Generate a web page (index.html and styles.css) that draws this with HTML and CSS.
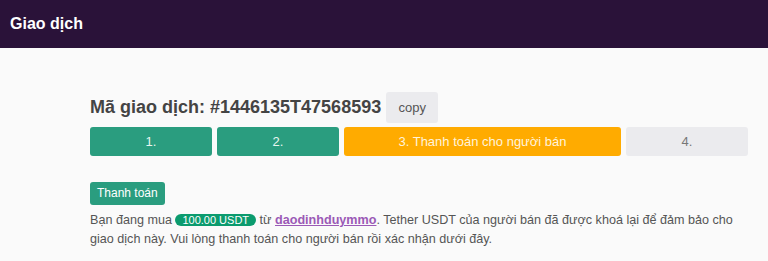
FILE: index.html
```html
<!DOCTYPE html>
<html>
    <head>
    <title>Giao dịch</title>
    <meta charset="UTF-8">
    <meta name="viewport" content="width=device-width, initial-scale=1.0">
    <link rel="stylesheet" href="styles.css">
    </head>

    <body>
        <div class="thanh-tren">Giao dịch</div>

        <div class="noi-dung">
            <div class="ma-gd">
                <span class="nhan">Mã giao dịch: #1446135T47568593</span>
                <button class="nut-copy">copy</button>
            </div>

            <div class="buoc">
                <div class="o-buoc xong">1.</div>
                <div class="o-buoc xong">2.</div>
                <div class="o-buoc dang">3. Thanh toán cho người bán</div>
                <div class="o-buoc cho">4.</div>
            </div>

            <span class="the">Thanh toán</span>
            <p class="mo-ta">
                Bạn đang mua <span class="vien">100.00 USDT</span> từ <a href="#" class="nguoi-ban">daodinhduymmo</a>. Tether USDT của người bán đã được khoá lại để đảm bảo cho giao dịch này. Vui lòng thanh toán cho người bán rồi xác nhận dưới đây.
            </p>
        </div>
    </body>
</html>
```

FILE: styles.css
```css
body{
    margin: 0;
    background-color: #fafafa;
    font-family: "Liberation Sans", Arial, sans-serif;
    font-size: 13px;
    color: #555;
}

.thanh-tren{
    height: 48px;
    background-color: #2a1239;
    color: white;
    font-size: 16px;
    font-weight: bold;
    line-height: 48px;
    padding-left: 10px;
}

.noi-dung{
    margin-left: 90px;
    width: 658px;
    padding-top: 44px;
}

.ma-gd{
    display: flex;
    align-items: center;
    gap: 5px;
}

.nhan{
    font-size: 18px;
    font-weight: bold;
    color: #444;
}

.nut-copy{
    width: 52px;
    height: 31px;
    border: none;
    border-radius: 3px;
    background-color: #ebebee;
    color: #555;
    font-family: inherit;
    font-size: 13px;
}

.buoc{
    display: grid;
    grid-template-columns: 122px 122px 1fr 122px;
    gap: 5px;
    margin-top: 4px;
}

.o-buoc{
    height: 29px;
    line-height: 29px;
    text-align: center;
    border-radius: 3px;
}

.xong{
    background-color: #2a9d7f;
    color: #e8f5f0;
}

.dang{
    background-color: #ffab00;
    color: #fff3dc;
}

.cho{
    background-color: #ebebee;
    color: #777;
}

.the{
    display: inline-block;
    margin-top: 26px;
    padding: 0 7px;
    height: 23px;
    line-height: 23px;
    font-size: 12px;
    color: white;
    background-color: #2a9d7f;
    border-radius: 3px;
}

.mo-ta{
    margin: 6px 0 0;
    font-size: 12.6px;
    line-height: 19px;
    color: #555;
}

.vien{
    display: inline-block;
    padding: 0 7px;
    line-height: 12px;
    font-size: 11px;
    color: white;
    background-color: #0b9b6e;
    border-radius: 8px;
}

.nguoi-ban{
    color: #9b59b6;
    font-weight: bold;
}
```
